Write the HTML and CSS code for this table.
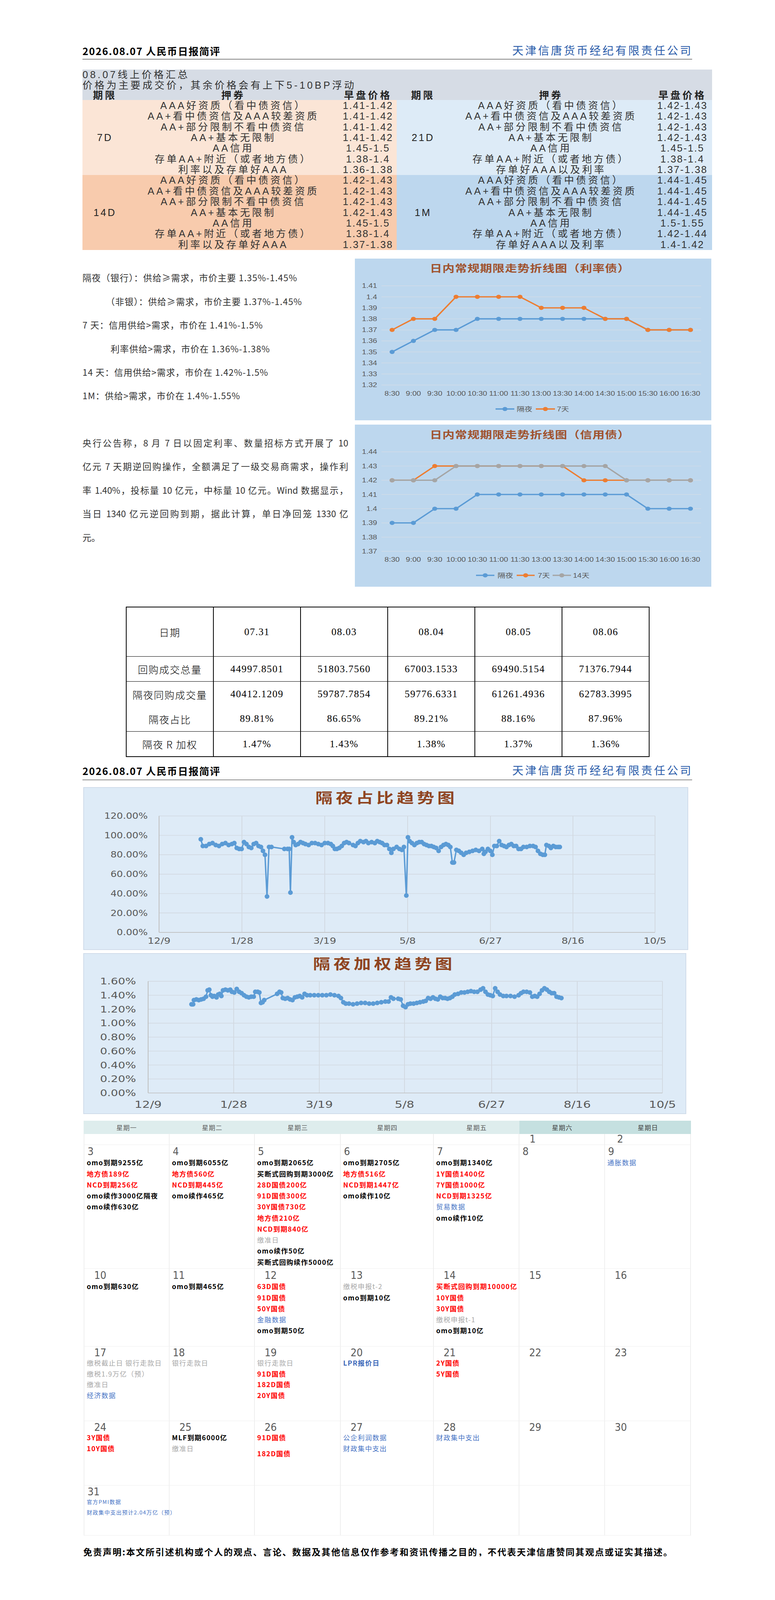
FILE: index.html
```html
<!DOCTYPE html>
<html lang="zh-CN">
<head>
<meta charset="utf-8">
<title>2026.08.07 人民币日报简评</title>
<link rel="stylesheet" href="styles.css">
</head>
<body>
<div class="page">

  <header class="doc-head doc-head--first">
    <div class="doc-title">2026.08.07 人民币日报简评</div>
    <div class="doc-company">天津信唐货币经纪有限责任公司</div>
  </header>

  <table class="price">
    <colgroup>
      <col class="w1"><col class="w2"><col class="w3"><col class="w4"><col class="w5"><col class="w6">
    </colgroup>
    <tr><td colspan="6" class="cap">08.07线上价格汇总</td></tr>
    <tr><td colspan="6" class="cap">价格为主要成交价，其余价格会有上下5-10BP浮动</td></tr>
    <tr class="hd"><th>期限</th><th>押券</th><th>早盘价格</th><th>期限</th><th>押券</th><th>早盘价格</th></tr>
    <tr><td rowspan="7" class="c7 per">7D</td><td class="c7">AAA好资质（看中债资信）</td><td class="c7 p">1.41-1.42</td><td rowspan="7" class="c21 per">21D</td><td class="c21">AAA好资质（看中债资信）</td><td class="c21 p">1.42-1.43</td></tr>
    <tr><td class="c7">AA+看中债资信及AAA较差资质</td><td class="c7 p">1.41-1.42</td><td class="c21">AA+看中债资信及AAA较差资质</td><td class="c21 p">1.42-1.43</td></tr>
    <tr><td class="c7">AA+部分限制不看中债资信</td><td class="c7 p">1.41-1.42</td><td class="c21">AA+部分限制不看中债资信</td><td class="c21 p">1.42-1.43</td></tr>
    <tr><td class="c7">AA+基本无限制</td><td class="c7 p">1.41-1.42</td><td class="c21">AA+基本无限制</td><td class="c21 p">1.42-1.43</td></tr>
    <tr><td class="c7">AA信用</td><td class="c7 p">1.45-1.5</td><td class="c21">AA信用</td><td class="c21 p">1.45-1.5</td></tr>
    <tr><td class="c7">存单AA+附近（或者地方债）</td><td class="c7 p">1.38-1.4</td><td class="c21">存单AA+附近（或者地方债）</td><td class="c21 p">1.38-1.4</td></tr>
    <tr><td class="c7">利率以及存单好AAA</td><td class="c7 p">1.36-1.38</td><td class="c21">存单好AAA以及利率</td><td class="c21 p">1.37-1.38</td></tr>
    <tr><td rowspan="7" class="c14 per">14D</td><td class="c14">AAA好资质（看中债资信）</td><td class="c14 p">1.42-1.43</td><td rowspan="7" class="c1m per">1M</td><td class="c1m">AAA好资质（看中债资信）</td><td class="c1m p">1.44-1.45</td></tr>
    <tr><td class="c14">AA+看中债资信及AAA较差资质</td><td class="c14 p">1.42-1.43</td><td class="c1m">AA+看中债资信及AAA较差资质</td><td class="c1m p">1.44-1.45</td></tr>
    <tr><td class="c14">AA+部分限制不看中债资信</td><td class="c14 p">1.42-1.43</td><td class="c1m">AA+部分限制不看中债资信</td><td class="c1m p">1.44-1.45</td></tr>
    <tr><td class="c14">AA+基本无限制</td><td class="c14 p">1.42-1.43</td><td class="c1m">AA+基本无限制</td><td class="c1m p">1.44-1.45</td></tr>
    <tr><td class="c14">AA信用</td><td class="c14 p">1.45-1.5</td><td class="c1m">AA信用</td><td class="c1m p">1.5-1.55</td></tr>
    <tr><td class="c14">存单AA+附近（或者地方债）</td><td class="c14 p">1.38-1.4</td><td class="c1m">存单AA+附近（或者地方债）</td><td class="c1m p">1.42-1.44</td></tr>
    <tr><td class="c14">利率以及存单好AAA</td><td class="c14 p">1.37-1.38</td><td class="c1m">存单好AAA以及利率</td><td class="c1m p">1.4-1.42</td></tr>
  </table>

  <section class="market">
    <div class="notes">
      <p class="note">隔夜（银行）：供给≥需求，市价主要 1.35%-1.45%</p>
      <p class="note note--ind1">（非银）：供给≥需求，市价主要 1.37%-1.45%</p>
      <p class="note">7 天：信用供给&gt;需求，市价在 1.41%-1.5%</p>
      <p class="note note--ind2">利率供给&gt;需求，市价在 1.36%-1.38%</p>
      <p class="note">14 天：信用供给&gt;需求，市价在 1.42%-1.5%</p>
      <p class="note">1M：供给&gt;需求，市价在 1.4%-1.55%</p>
      <p class="brief">
        <span class="brief-line">央行公告称，8 月 7 日以固定利率、数量招标方式开展了 10</span>
        <span class="brief-line">亿元 7 天期逆回购操作，全额满足了一级交易商需求，操作利</span>
        <span class="brief-line">率 1.40%，投标量 10 亿元，中标量 10 亿元。Wind 数据显示，</span>
        <span class="brief-line">当日 1340 亿元逆回购到期，据此计算，单日净回笼 1330 亿</span>
        <span class="brief-line brief-line--last">元。</span>
      </p>
    </div>

    <div class="charts">
      <div class="chart">
        <svg class="lc" viewBox="0 0 912 506" preserveAspectRatio="none">
          <text class="ct" x="448" y="42">日内常规期限走势折线图（利率债）</text>
          <path class="grid" d="M68 85H886M68 119.4H886M68 153.9H886M68 188.3H886M68 222.8H886M68 257.2H886M68 291.6H886M68 326.1H886M68 360.5H886M68 395H886"/>
          <g class="ax ax--y">
            <text x="57" y="92">1.41</text><text x="57" y="126.4">1.4</text><text x="57" y="160.9">1.39</text><text x="57" y="195.3">1.38</text><text x="57" y="229.8">1.37</text><text x="57" y="264.2">1.36</text><text x="57" y="298.6">1.35</text><text x="57" y="333.1">1.34</text><text x="57" y="367.5">1.33</text><text x="57" y="402">1.32</text>
          </g>
          <g class="ax ax--x">
            <text x="95.3" y="428">8:30</text><text x="149.8" y="428">9:00</text><text x="204.4" y="428">9:30</text><text x="258.9" y="428">10:00</text><text x="313.4" y="428">10:30</text><text x="367.9" y="428">11:00</text><text x="422.5" y="428">11:30</text><text x="477" y="428">13:00</text><text x="531.5" y="428">13:30</text><text x="586.1" y="428">14:00</text><text x="640.6" y="428">14:30</text><text x="695.1" y="428">15:00</text><text x="749.7" y="428">15:30</text><text x="804.2" y="428">16:00</text><text x="858.7" y="428">16:30</text>
          </g>
          <polyline class="sl blue" points="95.3,291.6 149.8,257.2 204.4,222.8 258.9,222.8 313.4,188.3 367.9,188.3 422.5,188.3 477,188.3 531.5,188.3 586.1,188.3 640.6,188.3 695.1,188.3 749.7,222.8 804.2,222.8 858.7,222.8"/>
          <path class="dot blue" d="M95.3 291.6h0M149.8 257.2h0M204.4 222.8h0M258.9 222.8h0M313.4 188.3h0M367.9 188.3h0M422.5 188.3h0M477 188.3h0M531.5 188.3h0M586.1 188.3h0M640.6 188.3h0M695.1 188.3h0M749.7 222.8h0M804.2 222.8h0M858.7 222.8h0"/>
          <polyline class="sl orange" points="95.3,222.8 149.8,188.3 204.4,188.3 258.9,119.4 313.4,119.4 367.9,119.4 422.5,119.4 477,153.9 531.5,153.9 586.1,153.9 640.6,188.3 695.1,188.3 749.7,222.8 804.2,222.8 858.7,222.8"/>
          <path class="dot orange" d="M95.3 222.8h0M149.8 188.3h0M204.4 188.3h0M258.9 119.4h0M313.4 119.4h0M367.9 119.4h0M422.5 119.4h0M477 153.9h0M531.5 153.9h0M586.1 153.9h0M640.6 188.3h0M695.1 188.3h0M749.7 222.8h0M804.2 222.8h0M858.7 222.8h0"/>
          <path class="sl blue" d="M360 470H408"/><path class="dot blue" d="M384 470h0"/>
          <text class="ax lg" x="414" y="477">隔夜</text>
          <path class="sl orange" d="M463 470H512"/><path class="dot orange" d="M487.5 470h0"/>
          <text class="ax lg" x="517" y="477">7天</text>
        </svg>
      </div>

      <div class="chart chart--second">
        <svg class="lc" viewBox="0 0 912 507" preserveAspectRatio="none">
          <text class="ct" x="448" y="43">日内常规期限走势折线图（信用债）</text>
          <path class="grid" d="M68 85H886M68 129.4H886M68 173.9H886M68 218.3H886M68 262.7H886M68 307.1H886M68 351.6H886M68 396H886"/>
          <g class="ax ax--y">
            <text x="57" y="92">1.44</text><text x="57" y="136.4">1.43</text><text x="57" y="180.9">1.42</text><text x="57" y="225.3">1.41</text><text x="57" y="269.7">1.4</text><text x="57" y="314.1">1.39</text><text x="57" y="358.6">1.38</text><text x="57" y="403">1.37</text>
          </g>
          <g class="ax ax--x">
            <text x="95.3" y="428">8:30</text><text x="149.8" y="428">9:00</text><text x="204.4" y="428">9:30</text><text x="258.9" y="428">10:00</text><text x="313.4" y="428">10:30</text><text x="367.9" y="428">11:00</text><text x="422.5" y="428">11:30</text><text x="477" y="428">13:00</text><text x="531.5" y="428">13:30</text><text x="586.1" y="428">14:00</text><text x="640.6" y="428">14:30</text><text x="695.1" y="428">15:00</text><text x="749.7" y="428">15:30</text><text x="804.2" y="428">16:00</text><text x="858.7" y="428">16:30</text>
          </g>
          <polyline class="sl blue" points="95.3,307.1 149.8,307.1 204.4,262.7 258.9,262.7 313.4,218.3 367.9,218.3 422.5,218.3 477,218.3 531.5,218.3 586.1,218.3 640.6,218.3 695.1,218.3 749.7,262.7 804.2,262.7 858.7,262.7"/>
          <path class="dot blue" d="M95.3 307.1h0M149.8 307.1h0M204.4 262.7h0M258.9 262.7h0M313.4 218.3h0M367.9 218.3h0M422.5 218.3h0M477 218.3h0M531.5 218.3h0M586.1 218.3h0M640.6 218.3h0M695.1 218.3h0M749.7 262.7h0M804.2 262.7h0M858.7 262.7h0"/>
          <polyline class="sl orange" points="95.3,173.9 149.8,173.9 204.4,129.4 258.9,129.4 313.4,129.4 367.9,129.4 422.5,129.4 477,129.4 531.5,129.4 586.1,173.9 640.6,173.9 695.1,173.9 749.7,173.9 804.2,173.9 858.7,173.9"/>
          <path class="dot orange" d="M95.3 173.9h0M149.8 173.9h0M204.4 129.4h0M258.9 129.4h0M313.4 129.4h0M367.9 129.4h0M422.5 129.4h0M477 129.4h0M531.5 129.4h0M586.1 173.9h0M640.6 173.9h0M695.1 173.9h0M749.7 173.9h0M804.2 173.9h0M858.7 173.9h0"/>
          <polyline class="sl gray" points="95.3,173.9 149.8,173.9 204.4,173.9 258.9,129.4 313.4,129.4 367.9,129.4 422.5,129.4 477,129.4 531.5,129.4 586.1,129.4 640.6,129.4 695.1,173.9 749.7,173.9 804.2,173.9 858.7,173.9"/>
          <path class="dot gray" d="M95.3 173.9h0M149.8 173.9h0M204.4 173.9h0M258.9 129.4h0M313.4 129.4h0M367.9 129.4h0M422.5 129.4h0M477 129.4h0M531.5 129.4h0M586.1 129.4h0M640.6 129.4h0M695.1 173.9h0M749.7 173.9h0M804.2 173.9h0M858.7 173.9h0"/>
          <path class="sl blue" d="M310 471H357"/><path class="dot blue" d="M333.5 471h0"/>
          <text class="ax lg" x="365" y="478">隔夜</text>
          <path class="sl orange" d="M414 471H460"/><path class="dot orange" d="M437 471h0"/>
          <text class="ax lg" x="468" y="478">7天</text>
          <path class="sl gray" d="M506 471H553"/><path class="dot gray" d="M529.5 471h0"/>
          <text class="ax lg" x="558" y="478">14天</text>
        </svg>
      </div>
    </div>
  </section>

  <table class="repo">
    <tr class="repo-head"><td class="lab">日期</td><td>07.31</td><td>08.03</td><td>08.04</td><td>08.05</td><td>08.06</td></tr>
    <tr class="repo-row"><td class="lab">回购成交总量</td><td>44997.8501</td><td>51803.7560</td><td>67003.1533</td><td>69490.5154</td><td>71376.7944</td></tr>
    <tr class="repo-row repo-row--open-b"><td class="lab">隔夜同购成交量</td><td>40412.1209</td><td>59787.7854</td><td>59776.6331</td><td>61261.4936</td><td>62783.3995</td></tr>
    <tr class="repo-row repo-row--open-t"><td class="lab">隔夜占比</td><td>89.81%</td><td>86.65%</td><td>89.21%</td><td>88.16%</td><td>87.96%</td></tr>
    <tr class="repo-row repo-row--last"><td class="lab">隔夜 R 加权</td><td>1.47%</td><td>1.43%</td><td>1.38%</td><td>1.37%</td><td>1.36%</td></tr>
  </table>

  <header class="doc-head doc-head--second">
    <div class="doc-title">2026.08.07 人民币日报简评</div>
    <div class="doc-company">天津信唐货币经纪有限责任公司</div>
  </header>

  <div class="trend trend--ratio">
    <svg viewBox="0 0 1548 509" preserveAspectRatio="none">
      <text class="tt" x="776" y="50">隔夜占比趋势图</text>
      <path class="tgrid" d="M194 90H1463M194 150.7H1463M194 211.3H1463M194 272H1463M194 332.7H1463M194 393.3H1463M406 90V454M618 90V454M830 90V454M1042 90V454M1253 90V454M1463 90V454"/>
      <path class="taxis" d="M194 90V454M194 454H1463"/>
      <g class="tax tax--y1">
        <text x="165" y="99">120.00%</text><text x="165" y="159.7">100.00%</text><text x="165" y="220.3">80.00%</text><text x="165" y="281">60.00%</text><text x="165" y="341.7">40.00%</text><text x="165" y="402.3">20.00%</text><text x="165" y="463">0.00%</text>
      </g>
      <g class="tax tax--x1">
        <text x="194" y="490">12/9</text><text x="406" y="490">1/28</text><text x="618" y="490">3/19</text><text x="830" y="490">5/8</text><text x="1042" y="490">6/27</text><text x="1253" y="490">8/16</text><text x="1463" y="490">10/5</text>
      </g>
      <g transform="matrix(1.0332 0 0 -3.033 -33 454)">
        <polyline class="tline" vector-effect="non-scaling-stroke" points="323,96 328,89 336,89 344,91 352,92 360,90 368,89 376,91 384,92 392,90 400,91 406,92 412,87 418,86 424,86 430,93 436,91 442,88 448,87 454,91 460,92 466,89 472,88 477,84 482,80 487,37 492,88 498,88 530,86 538,86 542,86 545,41 549,98 553,93 558,90 564,91 570,93 576,92 582,91 590,90 598,92 606,92 614,91 622,90 630,92 638,92 645,91 650,89 655,86 660,86 666,87 672,89 678,92 684,93 690,92 700,90 706,89 712,92 718,94 726,93 732,94 738,92 746,93 754,92 760,94 766,93 772,92 778,90 784,90 790,86 795,82 800,86 808,88 815,86 821,85 826,88 832,38 836,98 840,94 846,92 852,90 858,92 864,93 870,93 876,91 882,90 888,89 894,89 900,88 906,87 912,84 918,88 924,90 930,91 936,90 941,88 946,72 950,72 956,85 962,84 968,82 974,80 980,82 988,83 996,84 1004,85 1012,84 1020,86 1024,81 1028,83 1034,86 1040,84 1045,80 1050,89 1056,89 1062,94 1068,90 1074,89 1080,88 1086,90 1092,91 1098,89 1104,89 1110,86 1116,86 1122,88 1130,88 1138,89 1146,89 1152,88 1158,84 1164,81 1170,80 1175,80 1179,90 1185,89 1190,87 1196,89 1202,88 1208,88 1212,88"/>
        <path class="tdot" vector-effect="non-scaling-stroke" d="M323 96h.1M328 89h.1M336 89h.1M344 91h.1M352 92h.1M360 90h.1M368 89h.1M376 91h.1M384 92h.1M392 90h.1M400 91h.1M406 92h.1M412 87h.1M418 86h.1M424 86h.1M430 93h.1M436 91h.1M442 88h.1M448 87h.1M454 91h.1M460 92h.1M466 89h.1M472 88h.1M477 84h.1M482 80h.1M487 37h.1M492 88h.1M498 88h.1M530 86h.1M538 86h.1M542 86h.1M545 41h.1M549 98h.1M553 93h.1M558 90h.1M564 91h.1M570 93h.1M576 92h.1M582 91h.1M590 90h.1M598 92h.1M606 92h.1M614 91h.1M622 90h.1M630 92h.1M638 92h.1M645 91h.1M650 89h.1M655 86h.1M660 86h.1M666 87h.1M672 89h.1M678 92h.1M684 93h.1M690 92h.1M700 90h.1M706 89h.1M712 92h.1M718 94h.1M726 93h.1M732 94h.1M738 92h.1M746 93h.1M754 92h.1M760 94h.1M766 93h.1M772 92h.1M778 90h.1M784 90h.1M790 86h.1M795 82h.1M800 86h.1M808 88h.1M815 86h.1M821 85h.1M826 88h.1M832 38h.1M836 98h.1M840 94h.1M846 92h.1M852 90h.1M858 92h.1M864 93h.1M870 93h.1M876 91h.1M882 90h.1M888 89h.1M894 89h.1M900 88h.1M906 87h.1M912 84h.1M918 88h.1M924 90h.1M930 91h.1M936 90h.1M941 88h.1M946 72h.1M950 72h.1M956 85h.1M962 84h.1M968 82h.1M974 80h.1M980 82h.1M988 83h.1M996 84h.1M1004 85h.1M1012 84h.1M1020 86h.1M1024 81h.1M1028 83h.1M1034 86h.1M1040 84h.1M1045 80h.1M1050 89h.1M1056 89h.1M1062 94h.1M1068 90h.1M1074 89h.1M1080 88h.1M1086 90h.1M1092 91h.1M1098 89h.1M1104 89h.1M1110 86h.1M1116 86h.1M1122 88h.1M1130 88h.1M1138 89h.1M1146 89h.1M1152 88h.1M1158 84h.1M1164 81h.1M1170 80h.1M1175 80h.1M1179 90h.1M1185 89h.1M1190 87h.1M1196 89h.1M1202 88h.1M1208 88h.1M1212 88h.1"/>
      </g>
    </svg>
  </div>

  <div class="trend trend--rate">
    <svg viewBox="0 0 1543 503" preserveAspectRatio="none">
      <text class="tt" x="770" y="50">隔夜加权趋势图</text>
      <path class="tgrid" d="M166 88H1482M166 131.6H1482M166 175.3H1482M166 218.9H1482M166 262.5H1482M166 306.1H1482M166 349.8H1482M166 393.4H1482M385 88V437M604 88V437M822 88V437M1045 88V437M1264 88V437M1482 88V437"/>
      <path class="taxis" d="M166 88V437M166 437H1482"/>
      <g class="tax tax--y2">
        <text x="135" y="98">1.60%</text><text x="135" y="141.6">1.40%</text><text x="135" y="185.3">1.20%</text><text x="135" y="228.9">1.00%</text><text x="135" y="272.5">0.80%</text><text x="135" y="316.1">0.60%</text><text x="135" y="359.8">0.40%</text><text x="135" y="403.4">0.20%</text><text x="135" y="447">0.00%</text>
      </g>
      <g class="tax tax--x2">
        <text x="166" y="483">12/9</text><text x="385" y="483">1/28</text><text x="604" y="483">3/19</text><text x="822" y="483">5/8</text><text x="1045" y="483">6/27</text><text x="1264" y="483">8/16</text><text x="1482" y="483">10/5</text>
      </g>
      <g transform="matrix(1.0332 0 0 -218.1 -33 437)">
        <polyline class="tline" vector-effect="non-scaling-stroke" points="300,1.27 304,1.27 306,1.33 312,1.34 318,1.33 324,1.34 330,1.35 336,1.38 340,1.47 344,1.48 348,1.4 352,1.38 356,1.39 362,1.37 366,1.41 370,1.42 374,1.39 378,1.47 384,1.48 390,1.47 396,1.48 400,1.45 406,1.44 412,1.49 418,1.45 424,1.43 430,1.4 436,1.38 442,1.37 448,1.38 454,1.38 458,1.45 464,1.45 468,1.44 472,1.29 476,1.3 480,1.33 512,1.42 518,1.45 522,1.44 526,1.36 532,1.35 538,1.36 544,1.34 550,1.33 556,1.37 562,1.38 568,1.39 574,1.37 580,1.42 586,1.4 594,1.4 604,1.4 614,1.4 624,1.4 634,1.4 644,1.41 654,1.4 664,1.39 670,1.36 676,1.3 682,1.28 690,1.28 700,1.27 710,1.28 720,1.29 730,1.29 740,1.28 750,1.28 760,1.29 770,1.3 780,1.31 788,1.31 794,1.37 800,1.35 812,1.35 818,1.34 824,1.25 830,1.23 836,1.27 842,1.28 850,1.28 858,1.29 866,1.3 874,1.31 880,1.32 886,1.36 892,1.35 898,1.37 904,1.35 910,1.34 916,1.38 922,1.36 928,1.36 934,1.35 940,1.36 946,1.38 952,1.41 960,1.42 968,1.44 976,1.44 984,1.45 992,1.46 1000,1.45 1008,1.45 1016,1.48 1022,1.5 1028,1.45 1034,1.41 1040,1.4 1046,1.39 1052,1.5 1058,1.45 1064,1.41 1072,1.39 1080,1.39 1090,1.39 1100,1.38 1110,1.4 1116,1.43 1122,1.45 1130,1.45 1138,1.44 1144,1.38 1150,1.39 1156,1.38 1162,1.42 1168,1.47 1174,1.5 1180,1.48 1186,1.45 1192,1.43 1198,1.43 1204,1.38 1210,1.37 1216,1.36"/>
        <path class="tdot" vector-effect="non-scaling-stroke" d="M300 1.27h.1M304 1.27h.1M306 1.33h.1M312 1.34h.1M318 1.33h.1M324 1.34h.1M330 1.35h.1M336 1.38h.1M340 1.47h.1M344 1.48h.1M348 1.4h.1M352 1.38h.1M356 1.39h.1M362 1.37h.1M366 1.41h.1M370 1.42h.1M374 1.39h.1M378 1.47h.1M384 1.48h.1M390 1.47h.1M396 1.48h.1M400 1.45h.1M406 1.44h.1M412 1.49h.1M418 1.45h.1M424 1.43h.1M430 1.4h.1M436 1.38h.1M442 1.37h.1M448 1.38h.1M454 1.38h.1M458 1.45h.1M464 1.45h.1M468 1.44h.1M472 1.29h.1M476 1.3h.1M480 1.33h.1M512 1.42h.1M518 1.45h.1M522 1.44h.1M526 1.36h.1M532 1.35h.1M538 1.36h.1M544 1.34h.1M550 1.33h.1M556 1.37h.1M562 1.38h.1M568 1.39h.1M574 1.37h.1M580 1.42h.1M586 1.4h.1M594 1.4h.1M604 1.4h.1M614 1.4h.1M624 1.4h.1M634 1.4h.1M644 1.41h.1M654 1.4h.1M664 1.39h.1M670 1.36h.1M676 1.3h.1M682 1.28h.1M690 1.28h.1M700 1.27h.1M710 1.28h.1M720 1.29h.1M730 1.29h.1M740 1.28h.1M750 1.28h.1M760 1.29h.1M770 1.3h.1M780 1.31h.1M788 1.31h.1M794 1.37h.1M800 1.35h.1M812 1.35h.1M818 1.34h.1M824 1.25h.1M830 1.23h.1M836 1.27h.1M842 1.28h.1M850 1.28h.1M858 1.29h.1M866 1.3h.1M874 1.31h.1M880 1.32h.1M886 1.36h.1M892 1.35h.1M898 1.37h.1M904 1.35h.1M910 1.34h.1M916 1.38h.1M922 1.36h.1M928 1.36h.1M934 1.35h.1M940 1.36h.1M946 1.38h.1M952 1.41h.1M960 1.42h.1M968 1.44h.1M976 1.44h.1M984 1.45h.1M992 1.46h.1M1000 1.45h.1M1008 1.45h.1M1016 1.48h.1M1022 1.5h.1M1028 1.45h.1M1034 1.41h.1M1040 1.4h.1M1046 1.39h.1M1052 1.5h.1M1058 1.45h.1M1064 1.41h.1M1072 1.39h.1M1080 1.39h.1M1090 1.39h.1M1100 1.38h.1M1110 1.4h.1M1116 1.43h.1M1122 1.45h.1M1130 1.45h.1M1138 1.44h.1M1144 1.38h.1M1150 1.39h.1M1156 1.38h.1M1162 1.42h.1M1168 1.47h.1M1174 1.5h.1M1180 1.48h.1M1186 1.45h.1M1192 1.43h.1M1198 1.43h.1M1204 1.38h.1M1210 1.37h.1M1216 1.36h.1"/>
      </g>
    </svg>
  </div>

  <div class="cal">
    <div class="wd">星期一</div>
    <div class="wd">星期二</div>
    <div class="wd">星期三</div>
    <div class="wd">星期四</div>
    <div class="wd">星期五</div>
    <div class="wd wd--we">星期六</div>
    <div class="wd wd--we">星期日</div>

    <div class="day day--first day--top"></div>
    <div class="day day--top"></div>
    <div class="day day--top"></div>
    <div class="day day--top"></div>
    <div class="day day--top"></div>
    <div class="day day--top"><span class="num num--r1a">1</span></div>
    <div class="day day--top"><span class="num num--r1b">2</span></div>

    <div class="day day--first">
      <span class="num">3</span>
      <span class="ev ev--k">omo到期9255亿</span>
      <span class="ev ev--r">地方债189亿</span>
      <span class="ev ev--r">NCD到期256亿</span>
      <span class="ev ev--k">omo续作3000亿隔夜</span>
      <span class="ev ev--k">omo续作630亿</span>
    </div>
    <div class="day">
      <span class="num">4</span>
      <span class="ev ev--k">omo到期6055亿</span>
      <span class="ev ev--r">地方债560亿</span>
      <span class="ev ev--r">NCD到期445亿</span>
      <span class="ev ev--k">omo续作465亿</span>
    </div>
    <div class="day">
      <span class="num">5</span>
      <span class="ev ev--k">omo到期2065亿</span>
      <span class="ev ev--k">买断式回购到期3000亿</span>
      <span class="ev ev--r">28D国债200亿</span>
      <span class="ev ev--r">91D国债300亿</span>
      <span class="ev ev--r">30Y国债730亿</span>
      <span class="ev ev--r">地方债210亿</span>
      <span class="ev ev--r">NCD到期840亿</span>
      <span class="ev ev--g">缴准日</span>
      <span class="ev ev--k">omo续作50亿</span>
      <span class="ev ev--k">买断式回购续作5000亿</span>
    </div>
    <div class="day">
      <span class="num">6</span>
      <span class="ev ev--k">omo到期2705亿</span>
      <span class="ev ev--r">地方债516亿</span>
      <span class="ev ev--r">NCD到期1447亿</span>
      <span class="ev ev--k">omo续作10亿</span>
    </div>
    <div class="day">
      <span class="num">7</span>
      <span class="ev ev--k">omo到期1340亿</span>
      <span class="ev ev--r">1Y国债1400亿</span>
      <span class="ev ev--r">7Y国债1000亿</span>
      <span class="ev ev--r">NCD到期1325亿</span>
      <span class="ev ev--b">贸易数据</span>
      <span class="ev ev--k">omo续作10亿</span>
    </div>
    <div class="day"><span class="num">8</span></div>
    <div class="day">
      <span class="num">9</span>
      <span class="ev ev--b">通胀数据</span>
    </div>

    <div class="day day--first">
      <span class="num num--in">10</span>
      <span class="ev ev--k">omo到期630亿</span>
    </div>
    <div class="day">
      <span class="num">11</span>
      <span class="ev ev--k">omo到期465亿</span>
    </div>
    <div class="day">
      <span class="num num--in">12</span>
      <span class="ev ev--r">63D国债</span>
      <span class="ev ev--r">91D国债</span>
      <span class="ev ev--r">50Y国债</span>
      <span class="ev ev--b">金融数据</span>
      <span class="ev ev--k">omo到期50亿</span>
    </div>
    <div class="day">
      <span class="num num--in">13</span>
      <span class="ev ev--g">缴税申报t-2</span>
      <span class="ev ev--k">omo到期10亿</span>
    </div>
    <div class="day">
      <span class="num num--in">14</span>
      <span class="ev ev--r">买断式回购到期10000亿</span>
      <span class="ev ev--r">10Y国债</span>
      <span class="ev ev--r">30Y国债</span>
      <span class="ev ev--g">缴税申报t-1</span>
      <span class="ev ev--k">omo到期10亿</span>
    </div>
    <div class="day"><span class="num num--in">15</span></div>
    <div class="day"><span class="num num--in">16</span></div>

    <div class="day day--first day--tight">
      <span class="num num--in">17</span>
      <span class="ev ev--g">缴税截止日 银行走款日</span>
      <span class="ev ev--g">缴税1.9万亿（预）</span>
      <span class="ev ev--g">缴准日</span>
      <span class="ev ev--b">经济数据</span>
    </div>
    <div class="day day--tight">
      <span class="num">18</span>
      <span class="ev ev--g">银行走款日</span>
    </div>
    <div class="day day--tight">
      <span class="num num--in">19</span>
      <span class="ev ev--g">银行走款日</span>
      <span class="ev ev--r">91D国债</span>
      <span class="ev ev--r">182D国债</span>
      <span class="ev ev--r">20Y国债</span>
    </div>
    <div class="day day--tight">
      <span class="num num--in">20</span>
      <span class="ev ev--bb">LPR报价日</span>
    </div>
    <div class="day day--tight">
      <span class="num num--in">21</span>
      <span class="ev ev--r">2Y国债</span>
      <span class="ev ev--r">5Y国债</span>
    </div>
    <div class="day day--tight"><span class="num num--in">22</span></div>
    <div class="day day--tight"><span class="num num--in">23</span></div>

    <div class="day day--first day--tight">
      <span class="num num--in">24</span>
      <span class="ev ev--r">3Y国债</span>
      <span class="ev ev--r">10Y国债</span>
    </div>
    <div class="day day--tight">
      <span class="num num--in">25</span>
      <span class="ev ev--k">MLF到期6000亿</span>
      <span class="ev ev--g">缴准日</span>
    </div>
    <div class="day day--tight">
      <span class="num num--in">26</span>
      <span class="ev ev--r">91D国债</span>
      <span class="ev ev--r ev--gap">182D国债</span>
    </div>
    <div class="day day--tight">
      <span class="num num--in">27</span>
      <span class="ev ev--b">公企利润数据</span>
      <span class="ev ev--b">财政集中支出</span>
    </div>
    <div class="day day--tight">
      <span class="num num--in">28</span>
      <span class="ev ev--b">财政集中支出</span>
    </div>
    <div class="day day--tight"><span class="num num--in">29</span></div>
    <div class="day day--tight"><span class="num num--in">30</span></div>

    <div class="day day--first day--tight">
      <span class="num">31</span>
      <span class="ev ev--s">官方PMI数据</span>
      <span class="ev ev--s">财政集中支出预计2.04万亿（预）</span>
    </div>
    <div class="day day--tight"></div>
    <div class="day day--tight"></div>
    <div class="day day--tight"></div>
    <div class="day day--tight"></div>
    <div class="day day--tight"></div>
    <div class="day day--tight"></div>
  </div>

  <p class="disclaimer">免责声明:本文所引述机构或个人的观点、言论、数据及其他信息仅作参考和资讯传播之目的，不代表天津信唐赞同其观点或证实其描述。</p>

</div>
</body>
</html>
```

FILE: styles.css
```css
/*
  The report is drawn on a 1983 x 5000 sheet.
  1rem  = 10 sheet pixels across (window width / 198.3)
  --v   = 1 sheet pixel down (window height / 5000)
  --f   = font unit, the mean of the two
  --ls  = extra tracking per font pixel when the sheet is wider than it is tall
*/
html {
  font-size: calc(100vw / 198.3);
  --v: calc(100vh / 5000);
  --f: calc((100vw / 1983 + 100vh / 5000) / 2);
  --ls: calc((100vw / 1983 - 100vh / 5000) / 2);
}
* { box-sizing: border-box; }
html, body { margin: 0; padding: 0; background: #ffffff; }
body {
  font-family: "Noto Sans CJK SC", "Liberation Sans", sans-serif;
  font-size: calc(25 * var(--f));
  color: #222;
}
.page { width: 198.3rem; padding-left: 21.1rem; }

/* document header */
.doc-head {
  width: 156rem;
  display: flex;
  justify-content: space-between;
  align-items: flex-end;
}
.doc-head--first {
  height: calc(185 * var(--v));
  padding-bottom: calc(10 * var(--v));
  border-bottom: calc(2 * var(--v)) solid #111;
}
.doc-head--second {
  height: calc(71 * var(--v));
  padding-bottom: calc(12 * var(--v));
  border-bottom: 1px solid #222;
}
.doc-title {
  font-size: calc(28 * var(--f));
  line-height: calc(30 * var(--v));
  letter-spacing: calc(20 * var(--ls));
  font-weight: 700;
  color: #000;
}
.doc-company {
  font-size: calc(31.5 * var(--f));
  line-height: calc(36 * var(--v));
  letter-spacing: calc(0.15rem + 31.5 * var(--ls));
  margin-right: -0.15rem;
  color: #2a5caa;
}

/* price table */
.price {
  margin-top: calc(32 * var(--v));
  width: 161.1rem;
  table-layout: fixed;
  border-collapse: collapse;
  font-family: "Liberation Sans", "Noto Sans CJK SC", sans-serif;
  font-size: calc(28 * var(--f));
  color: #333;
}
.w1 { width: 11.5rem; } .w2 { width: 54.2rem; } .w3 { width: 14.7rem; }
.w4 { width: 13.5rem; } .w5 { width: 52rem; } .w6 { width: 15.2rem; }
.price td, .price th {
  padding: 0;
  height: calc(33.43 * var(--v));
  line-height: calc(30 * var(--v));
  text-align: center;
  white-space: nowrap;
  letter-spacing: calc(0.4rem + 14 * var(--ls));
}
.price .cap { background: #d6dce5; text-align: left; height: calc(33 * var(--v)); }
.price th { background: #d6dce5; height: calc(29 * var(--v)); font-weight: 700; color: #222; }
.price .per { letter-spacing: calc(0.3rem + 10 * var(--ls)); color: #222; }
.price .p { letter-spacing: calc(0.15rem + 10 * var(--ls)); }
.c7 { background: #fbe5d6; }
.c14 { background: #f8cbad; }
.c21 { background: #ddebf7; }
.c1m { background: #bdd7ee; }

/* market section */
.market { display: flex; width: 160.9rem; margin-top: calc(27 * var(--v)); }
.notes {
  width: 69.7rem;
  padding-top: calc(24 * var(--v));
  font-size: calc(25 * var(--f));
  line-height: calc(73.7 * var(--v));
  color: #333;
}
.note { margin: 0; white-space: nowrap; letter-spacing: calc(12 * var(--ls)); }
.note--ind1 { padding-left: 6rem; }
.note--ind2 { padding-left: 7.2rem; }
.brief { margin: calc(73.7 * var(--v)) 0 0; width: 68rem; }
.brief-line { display: block; white-space: nowrap; text-align: justify; text-align-last: justify; }
.brief-line--last { text-align-last: left; }

.charts { width: 91.2rem; display: flex; flex-direction: column; gap: calc(13 * var(--v)); }
.chart { width: 91.2rem; height: calc(506 * var(--v)); background: #bdd7ee; }
.chart--second { height: calc(507 * var(--v)); }
.chart svg { display: block; width: 100%; height: 100%; overflow: visible; }

.ct {
  font-family: "Noto Sans CJK SC", sans-serif;
  font-weight: 700; font-size: 31px; letter-spacing: 1px;
  fill: #a0522d; text-anchor: middle;
}
.ax { font-family: "Liberation Sans", "Noto Sans CJK SC", sans-serif; font-size: 20px; fill: #595959; }
.ax--y { text-anchor: end; }
.ax--x { text-anchor: middle; }
.lg { text-anchor: start; }
.grid { fill: none; stroke: #d6dde6; stroke-width: 1.5; }
.sl { fill: none; stroke-width: 4; stroke-linejoin: round; }
.dot { fill: none; stroke-width: 13; stroke-linecap: round; }
.blue { stroke: #5b9bd5; }
.orange { stroke: #ed7d31; }
.gray { stroke: #a5a5a5; }

/* repo table */
.repo {
  margin: calc(62 * var(--v)) 0 0 11.1rem;
  width: 134rem;
  table-layout: fixed;
  border-collapse: collapse;
  font-family: "Liberation Serif", "Noto Sans CJK SC", serif;
  font-size: calc(28 * var(--f));
  color: #000;
}
.repo td {
  padding: 0;
  text-align: center;
  border-left: 0.2rem solid #000;
  border-right: 0.2rem solid #000;
  border-top: 1px solid #000;
  border-bottom: 1px solid #000;
  letter-spacing: calc(0.06rem + 10 * var(--ls));
}
.repo .lab { font-family: "Noto Sans CJK SC", sans-serif; font-weight: 300; letter-spacing: calc(20 * var(--ls)); }
.repo-head td { height: calc(155 * var(--v)); border-top: 2px solid #000; }
.repo-row td { height: calc(78 * var(--v)); }
.repo-row--last td { height: calc(79 * var(--v)); border-bottom: 2px solid #000; }
.repo-row--open-b td { border-bottom: none; }
.repo-row--open-t td { border-top: none; }

/* trend charts */
.trend { margin-left: 0.2rem; background: #deebf7; outline: 2px solid #d0dcea; outline-offset: -2px; }
.trend--ratio { margin-top: calc(23 * var(--v)); width: 154.8rem; height: calc(509 * var(--v)); }
.trend--rate { margin-top: calc(9 * var(--v)); width: 154.3rem; height: calc(503 * var(--v)); }
.trend svg { display: block; width: 100%; height: 100%; overflow: visible; }
.tt {
  font-family: "Noto Sans CJK SC", sans-serif;
  font-weight: 700; font-size: 44px; letter-spacing: 8px;
  fill: #8f4420; text-anchor: middle;
}
.tax { font-family: "DejaVu Sans", "Liberation Sans", sans-serif; fill: #595959; }
.tax--y1 { font-size: 25px; text-anchor: end; }
.tax--x1 { font-size: 26px; text-anchor: middle; }
.tax--y2 { font-size: 29px; text-anchor: end; }
.tax--x2 { font-size: 31px; text-anchor: middle; }
.tgrid { fill: none; stroke: #d2d9e1; stroke-width: 2; }
.taxis { fill: none; stroke: #bfbfbf; stroke-width: 2; }
.tline { fill: none; stroke: #5b9bd5; stroke-width: 3.6; stroke-linejoin: round; vector-effect: non-scaling-stroke; }
.tdot { fill: none; stroke: #5b9bd5; stroke-width: 12; stroke-linecap: round; vector-effect: non-scaling-stroke; }

/* calendar */
.cal {
  margin: calc(21 * var(--v)) 0 0 0.3rem;
  width: 155.4rem;
  display: grid;
  grid-template-columns: 22rem 21.8rem 22rem 23.8rem 21.9rem 21.9rem 22rem;
  grid-template-rows:
    calc(42 * var(--v)) calc(34 * var(--v)) calc(387 * var(--v)) calc(243 * var(--v))
    calc(233 * var(--v)) calc(201 * var(--v)) calc(157 * var(--v));
  font-family: "Noto Sans CJK SC", sans-serif;
}
.wd {
  background: #deeded;
  color: #595959;
  font-size: calc(18 * var(--f));
  line-height: calc(42 * var(--v));
  letter-spacing: calc(12 * var(--ls));
  text-align: center;
}
.wd--we { background: #c5e0e0; color: #3f3f3f; }
.day {
  border-right: 0.2rem solid #efefef;
  border-bottom: calc(2 * var(--v)) solid #efefef;
  padding: calc(2 * var(--v)) 0 0 0.6rem;
  min-width: 0;
}
.day--first { border-left: 0.2rem solid #efefef; }
.day--top { padding-top: 0; }
.day--tight { padding-top: calc(6 * var(--v)); }
.num {
  display: block;
  font-family: "Liberation Sans Narrow", "DejaVu Sans Condensed", "Open Sans", sans-serif;
  font-weight: 300;
  font-size: calc(30 * var(--f));
  line-height: calc(36 * var(--v));
  color: #595959;
  margin-left: 0.2rem;
}
.num--in { margin-left: 1.9rem; }
.num--r1a { margin-left: 2rem; }
.num--r1b { margin-left: 2.5rem; }
.day--top .num { line-height: calc(32 * var(--v)); }
.day--tight .num { line-height: calc(28 * var(--v)); }
.ev {
  display: block;
  font-size: calc(19 * var(--f));
  line-height: calc(34.5 * var(--v));
  letter-spacing: calc(16 * var(--ls));
  white-space: nowrap;
}
.day--tight .ev { line-height: calc(33.7 * var(--v)); }
.ev--k { color: #000; font-weight: 700; }
.ev--r { color: #ff0000; font-weight: 700; }
.ev--g { color: #a6a6a6; }
.ev--b { color: #4472c4; }
.ev--bb { color: #3a66b8; font-weight: 700; }
.day--tight .ev--s { font-size: calc(15 * var(--f)); line-height: calc(34 * var(--v)); color: #4472c4; }
.ev--gap { margin-top: calc(17 * var(--v)); }

.disclaimer {
  margin: calc(38 * var(--v)) 0 0 0.2rem;
  font-size: calc(25 * var(--f));
  line-height: calc(26 * var(--v));
  letter-spacing: calc(25 * var(--ls));
  font-weight: 700;
  color: #000;
  white-space: nowrap;
}
```
